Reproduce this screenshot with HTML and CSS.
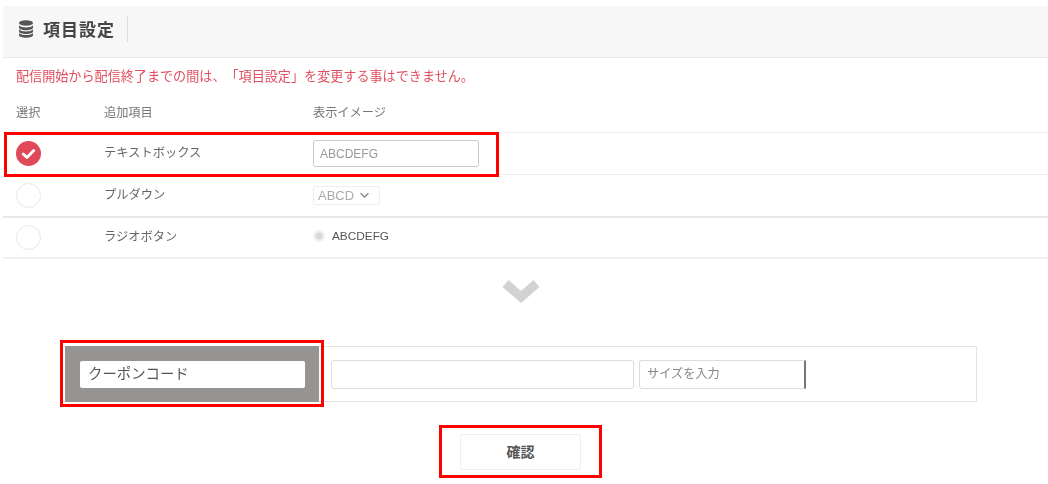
FILE: index.html
```html
<!DOCTYPE html>
<html lang="ja">
<head>
<meta charset="utf-8">
<title>項目設定</title>
<link rel="stylesheet" href="styles.css">
</head>
<body>
<main class="page">
  <header class="header">
    <svg class="db-icon" viewBox="0 0 16 18" width="16" height="18" aria-hidden="true">
      <ellipse cx="8" cy="3" rx="7" ry="2.700"/>
      <path d="M1 5.200c1 1.500 3.800 2.200 7 2.200s6-.7 7-2.200v2.600c0 1.400-3.100 2.500-7 2.500s-7-1.100-7-2.500z"/>
      <path d="M1 9.200c1 1.500 3.800 2.200 7 2.200s6-.7 7-2.200v2.400c0 1.400-3.100 2.500-7 2.500s-7-1.100-7-2.500z"/>
      <path d="M1 13c1 1.400 3.800 2.100 7 2.100s6-.7 7-2.100v2.300c0 1.400-3.100 2.500-7 2.500s-7-1.100-7-2.500z"/>
    </svg>
    <h1 class="title">項目設定</h1>
    <span class="title-rule"></span>
  </header>

  <p class="notice">配信開始から配信終了までの間は、「項目設定」を変更する事はできません。</p>

  <section class="options">
    <div class="row row-head">
      <span>選択</span>
      <span>追加項目</span>
      <span>表示イメージ</span>
    </div>
    <div class="row row-first">
      <span class="check check-on">
        <svg viewBox="0 0 26 26" width="25" height="25" aria-hidden="true">
          <path d="M7.500 13.500l3.800 3.600 7.200-7.200" fill="none" stroke="#fff" stroke-width="3" stroke-linecap="round" stroke-linejoin="round"/>
        </svg>
      </span>
      <span class="label">テキストボックス</span>
      <span class="sample-input">ABCDEFG</span>
      <span class="mark mark-row"></span>
    </div>
    <div class="row">
      <span class="check"></span>
      <span class="label">プルダウン</span>
      <span class="sample-select">ABCD
        <svg viewBox="0 0 12 8" width="11" height="7" aria-hidden="true"><path d="M1.500 1.500l4.500 4.300 4.500-4.300" fill="none" stroke="#888" stroke-width="1.600"/></svg>
      </span>
    </div>
    <div class="row row-thick">
      <span class="check"></span>
      <span class="label">ラジオボタン</span>
      <span class="sample-radio"><i class="radio-dot"></i>ABCDEFG</span>
    </div>
  </section>

  <div class="arrow">
    <svg viewBox="0 0 38 24" width="38" height="24" aria-hidden="true">
      <path d="M3.500 4.500L19 18 34.500 4.500" fill="none" stroke="#d2d2d2" stroke-width="9"/>
    </svg>
  </div>

  <section class="field">
    <div class="field-name"><span class="name-box">クーポンコード</span></div>
    <span class="field-input field-wide"></span>
    <span class="field-input field-size">サイズを入力</span>
    <span class="mark mark-field"></span>
  </section>

  <div class="actions">
    <button class="confirm" type="button">確認</button>
    <span class="mark mark-button"></span>
  </div>
</main>
</body>
</html>
```

FILE: styles.css
```css
* {
  box-sizing: border-box;
}

html,
body {
  margin: 0;
  height: 484px;
  overflow: hidden;
  background: #fff;
}

body {
  font-family: "Noto Sans CJK JP", "Liberation Sans", sans-serif;
  color: #555;
  font-size: 12px;
  text-spacing-trim: space-all;
}

.page {
  padding: 6px 0 0 3px;
  filter: blur(0.5px);
}

.header {
  display: flex;
  align-items: center;
  height: 52px;
  padding: 0 0 5px 15px;
  background: #f7f7f7;
  border-bottom: 1px solid #e8e8e8;
}

.db-icon {
  fill: #555;
}

.title {
  margin: 0 0 0 9px;
  font-size: 17px;
  letter-spacing: 1px;
  line-height: 24px;
  font-weight: 700;
  color: #444;
}

.title-rule {
  width: 1px;
  height: 26px;
  margin-left: 12px;
  background: #ddd;
}

.notice {
  margin: 9px 0 0 13px;
  line-height: 18px;
  font-size: 13.100px;
  color: #e2505f;
}

.options {
  margin-top: 10px;
}

.row {
  position: relative;
  display: grid;
  grid-template-columns: 88px 209px 1fr;
  align-items: center;
  height: 42px;
  padding-left: 13px;
  border-top: 1px solid #eee;
}

.row-head {
  height: 37px;
  border-top: 0;
  padding-bottom: 4px;
  color: #777;
  font-size: 12.200px;
}

.row-thick {
  border-top: 2px solid #e8e8e8;
  border-bottom: 2px solid #f0f0f0;
  height: 43px;
}

.label {
  font-size: 12.250px;
  color: #666;
  padding-bottom: 3px;
}

.check {
  width: 25px;
  height: 25px;
  border: 1.500px solid #e8e8e8;
  border-radius: 50%;
}

.check-on {
  display: block;
  background: #e04a58;
  border: 0;
}

.check-on svg {
  display: block;
}

.sample-input {
  display: flex;
  align-items: center;
  width: 166px;
  height: 27px;
  padding-left: 6px;
  border: 1px solid #ccc;
  border-radius: 2px;
  font-family: "Liberation Sans", sans-serif;
  color: #999;
  font-size: 12px;
}

.sample-select {
  display: flex;
  align-items: center;
  gap: 5px;
  width: 67px;
  height: 19px;
  padding-left: 4px;
  border: 1px solid #eee;
  border-radius: 2px;
  font-family: "Liberation Sans", sans-serif;
  color: #aaa;
  font-size: 13px;
}

.sample-radio {
  display: flex;
  align-items: center;
  padding-bottom: 3px;
  font-family: "Liberation Sans", sans-serif;
  color: #555;
  font-size: 11.800px;
}

.radio-dot {
  width: 12px;
  height: 12px;
  margin-right: 7px;
  border-radius: 50%;
  background: radial-gradient(circle, #d8d8d8 0 3px, #f0f0f0 4px);
}

.arrow {
  display: flex;
  justify-content: center;
  height: 24px;
  margin-top: 20px;
  padding-right: 10px;
}

.field {
  position: relative;
  display: flex;
  align-items: center;
  width: 915px;
  height: 56px;
  margin: 43px 0 0 59px;
  padding-left: 2px;
  border: 1px solid #e2e4e4;
}

.field-name {
  display: flex;
  align-items: center;
  width: 254px;
  height: 56px;
  margin-right: 12px;
  padding-left: 15px;
  background: #959492;
}

.name-box {
  display: flex;
  align-items: center;
  width: 225px;
  height: 27px;
  padding: 0 0 4px 8px;
  background: #fff;
  border-radius: 2px;
  color: #555;
  font-size: 14.400px;
}

.field-input {
  display: flex;
  align-items: center;
  height: 29px;
  padding-bottom: 2px;
  border: 1px solid #ddd;
  border-radius: 3px;
  color: #888;
  font-size: 12.200px;
}

.field-wide {
  width: 303px;
  margin-right: 5px;
}

.field-size {
  width: 167px;
  padding-left: 7px;
  border-right: 2px solid #777;
  border-radius: 3px 0 0 3px;
}

.actions {
  position: relative;
  display: flex;
  justify-content: center;
  margin: 32px 0 0;
  padding-right: 9px;
}

.confirm {
  width: 121px;
  height: 36px;
  margin-left: -1px;
  padding: 0 0 3px;
  background: #fff;
  border: 1px solid #efefef;
  border-radius: 2px;
  font-family: inherit;
  font-size: 14px;
  font-weight: 700;
  color: #555;
}

.mark {
  position: absolute;
  z-index: 1;
  border: 3px solid #f00;
  pointer-events: none;
}

.mark-row {
  left: 1px;
  top: -1px;
  width: 495px;
  height: 45px;
}

.mark-field {
  left: -3px;
  top: -7px;
  width: 264px;
  height: 67px;
}

.mark-button {
  left: 436px;
  top: -9px;
  width: 163px;
  height: 53px;
}
```
